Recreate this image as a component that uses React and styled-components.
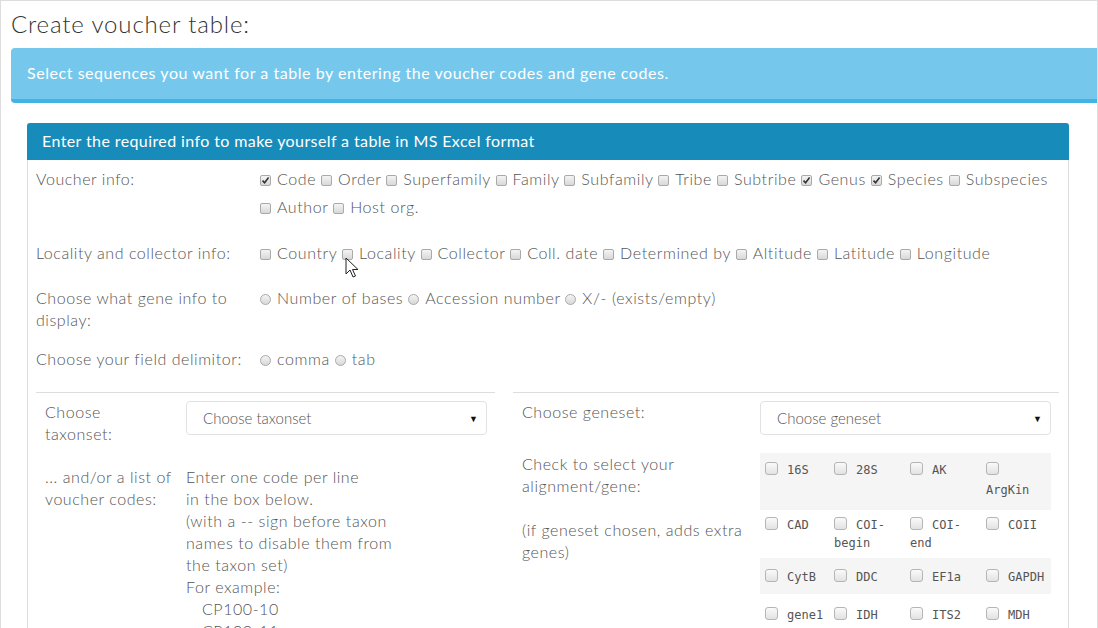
import React from 'react'
import styled, { createGlobalStyle } from 'styled-components'

const GlobalStyle = createGlobalStyle`
  html, body {
    margin: 0;
    padding: 0;
    background: #fff;
  }
  body {
    font-family: Lato, "Open Sans", sans-serif;
    color: #555;
  }
`

const Frame = styled.div`
  position: relative;
  box-sizing: border-box;
  width: 1098px;
  height: 628px;
  overflow: hidden;
  border: 1px solid #ddd;
  border-bottom: none;
  padding-left: 10px;
`

const Title = styled.h2`
  margin: 9px 0 11px;
  font-size: 24px;
  line-height: 27px;
  font-weight: 300;
  letter-spacing: 0.85px;
  color: #333;
`

const Alert = styled.div`
  padding: 14px 16px 15px;
  background: #75c8ec;
  border-bottom: 4px solid #41b4e3;
  border-radius: 4px 0 0 4px;
  color: #fff;
  font-size: 16px;
  line-height: 22px;
  letter-spacing: 0.55px;
`

const Panel = styled.div`
  margin: 20px 28px 0 16px;
  border: 1px solid #ddd;
  border-top: none;
  border-radius: 4px 4px 0 0;
`

const PanelHeading = styled.div`
  height: 37px;
  box-sizing: border-box;
  margin: 0 -1px;
  padding: 0 16px 2px 15px;
  background: #178cbb;
  border-radius: 3px 3px 0 0;
  color: #fff;
  font-size: 16px;
  line-height: 35px;
  letter-spacing: 0.4px;
`

const PanelBody = styled.div`
  padding: 5px 8px 0;
`

const FormRow = styled.div`
  display: grid;
  grid-template-columns: 224px 1fr;
  margin-bottom: ${p => p.gap ?? 17}px;
`

const Label = styled.div`
  padding-top: ${p => p.top ?? 3}px;
  font-size: 16px;
  line-height: 22px;
  font-weight: 300;
  letter-spacing: 0.55px;
`

const Controls = styled.div`
  font-size: 16px;
  line-height: 28px;
  font-weight: 300;
  letter-spacing: 0.6px;
  padding-right: 3px;
`

const Option = styled.label`
  white-space: nowrap;
`

const Box = styled.span`
  display: inline-block;
  box-sizing: border-box;
  width: 11px;
  height: 11px;
  margin-right: 6px;
  vertical-align: -1px;
  border: 1px solid #a9a9a9;
  border-radius: ${p => (p.round ? '50%' : '2px')};
  background: linear-gradient(#f4f4f4, #d8d8d8);
  position: relative;
`

const Tick = styled.svg`
  position: absolute;
  left: 0;
  top: 0;
`

const Check = ({ checked, round }) => (
  <Box round={round}>
    {checked && (
      <Tick width="9" height="9" viewBox="0 0 9 9">
        <path d="M1.5 4.6 L3.6 6.8 L7.6 1.6" fill="none" stroke="#333" strokeWidth="1.6" />
      </Tick>
    )}
  </Box>
)

const Rule = styled.div`
  border-top: 1px solid #ddd;
`

const Columns = styled.div`
  display: grid;
  grid-template-columns: 459px 546px;
  gap: 18px;
  margin-top: 19px;
`

const SubRow = styled.div`
  display: grid;
  grid-template-columns: ${p => p.labelWidth}px 1fr;
  padding: 0 8px 0 9px;
  margin-top: ${p => p.top}px;
`

const Select = styled.div`
  display: flex;
  align-items: center;
  justify-content: space-between;
  height: 34px;
  box-sizing: border-box;
  padding: 0 8px 0 16px;
  border: 1px solid #e2e2e2;
  border-radius: 4px;
  font-size: 15px;
  font-weight: 300;
  color: #555;
`

const Caret = styled.span`
  font-size: 9px;
  color: #111;
`

const Text = styled.div`
  font-size: 16px;
  line-height: 22px;
  font-weight: 300;
  letter-spacing: 0.55px;
`

const Indent = styled.div`
  padding-left: 16px;
`

const GeneTable = styled.div`
  font-family: "DejaVu Sans Mono", monospace;
  font-size: 12px;
  color: #555;
`

const GeneRow = styled.div`
  display: grid;
  grid-template-columns: 69px 76px 76px 70px;
  height: ${p => p.h}px;
  background: ${p => (p.striped ? '#f5f5f5' : 'transparent')};
`

const GeneCell = styled.div`
  padding: ${p => p.pad}px 4px 0 5px;
  line-height: ${p => p.lh}px;
`

const GeneBox = styled.span`
  display: inline-block;
  box-sizing: border-box;
  width: 13px;
  height: 13px;
  margin-right: 9px;
  vertical-align: -1px;
  border: 1px solid #b5b5b5;
  border-radius: 3px;
  background: linear-gradient(#fafafa, #e2e2e2);
`

const Cursor = styled.svg`
  position: absolute;
  left: 344px;
  top: 256px;
`

const voucherFields = [
  ['Code', true], ['Order'], ['Superfamily'], ['Family'], ['Subfamily'], ['Tribe'],
  ['Subtribe'], ['Genus', true], ['Species', true], ['Subspecies'], ['Author'], ['Host org.']
]
const localityFields = ['Country', 'Locality', 'Collector', 'Coll. date', 'Determined by', 'Altitude', 'Latitude', 'Longitude']

const geneRows = [
  { h: 57, striped: true, pad: 7, lh: 20, genes: ['16S', '28S', 'AK', 'ArgKin'] },
  { h: 48, pad: 6, lh: 18, genes: ['CAD', 'COI-begin', 'COI-end', 'COII'] },
  { h: 36, striped: true, pad: 10, lh: 18, genes: ['CytB', 'DDC', 'EF1a', 'GAPDH'] },
  { h: 36, pad: 12, lh: 18, genes: ['gene1', 'IDH', 'ITS2', 'MDH'] }
]

const renderGene = name => {
  if (name === 'ArgKin') return <><GeneBox /><br />ArgKin</>
  if (name.startsWith('COI-')) return <><GeneBox />COI-<br />{name.slice(4)}</>
  return <><GeneBox />{name}</>
}

export default function App() {
  return (
    <>
      <GlobalStyle />
      <Frame>
        <Title>Create voucher table:</Title>
        <Alert>Select sequences you want for a table by entering the voucher codes and gene codes.</Alert>
        <Panel>
          <PanelHeading>Enter the required info to make yourself a table in MS Excel format</PanelHeading>
          <PanelBody>
            <FormRow gap={18}>
              <Label>Voucher info:</Label>
              <Controls>
                {voucherFields.map(([name, on]) => (
                  <React.Fragment key={name}>
                    <Option><Check checked={on} />{name}</Option>{' '}
                  </React.Fragment>
                ))}
              </Controls>
            </FormRow>
            <FormRow>
              <Label>Locality and collector info:</Label>
              <Controls>
                {localityFields.map(name => (
                  <React.Fragment key={name}>
                    <Option><Check />{name}</Option>{' '}
                  </React.Fragment>
                ))}
              </Controls>
            </FormRow>
            <FormRow gap={14}>
              <Label>Choose what gene info to display:</Label>
              <Controls>
                <Option><Check round />Number of bases</Option>{' '}
                <Option><Check round />Accession number</Option>{' '}
                <Option><Check round />X/- (exists/empty)</Option>
              </Controls>
            </FormRow>
            <FormRow gap={0}>
              <Label>Choose your field delimitor:</Label>
              <Controls>
                <Option><Check round />comma</Option>{' '}
                <Option><Check round />tab</Option>
              </Controls>
            </FormRow>
            <Columns>
              <Rule>
                <SubRow labelWidth={141} top={8}>
                  <Text>Choose<br />taxonset:</Text>
                  <Select>Choose taxonset<Caret>▼</Caret></Select>
                </SubRow>
                <SubRow labelWidth={141} top={21}>
                  <Text>... and/or a list of<br />voucher codes:</Text>
                  <Text>
                    Enter one code per line<br />
                    in the box below.<br />
                    (with a -- sign before taxon<br />
                    names to disable them from<br />
                    the taxon set)<br />
                    For example:
                    <Indent>CP100-10<br />CP100-11</Indent>
                  </Text>
                </SubRow>
              </Rule>
              <Rule>
                <SubRow labelWidth={238} top={8}>
                  <Text>Choose geneset:</Text>
                  <Select>Choose geneset<Caret>▼</Caret></Select>
                </SubRow>
                <SubRow labelWidth={238} top={18}>
                  <Text>
                    Check to select your<br />alignment/gene:<br /><br />
                    (if geneset chosen, adds extra<br />genes)
                  </Text>
                  <GeneTable>
                    {geneRows.map((row, i) => (
                      <GeneRow key={i} h={row.h} striped={row.striped}>
                        {row.genes.map(g => (
                          <GeneCell key={g} pad={row.pad} lh={row.lh}>{renderGene(g)}</GeneCell>
                        ))}
                      </GeneRow>
                    ))}
                  </GeneTable>
                </SubRow>
              </Rule>
            </Columns>
          </PanelBody>
        </Panel>
        <Cursor width="14" height="22" viewBox="0 0 14 22">
          <path d="M1 1 L1 17 L5 13 L8 20 L10.5 19 L7.5 12.5 L13 12.5 Z" fill="#fff" stroke="#222" strokeWidth="1" strokeLinejoin="round" />
        </Cursor>
      </Frame>
    </>
  )
}
